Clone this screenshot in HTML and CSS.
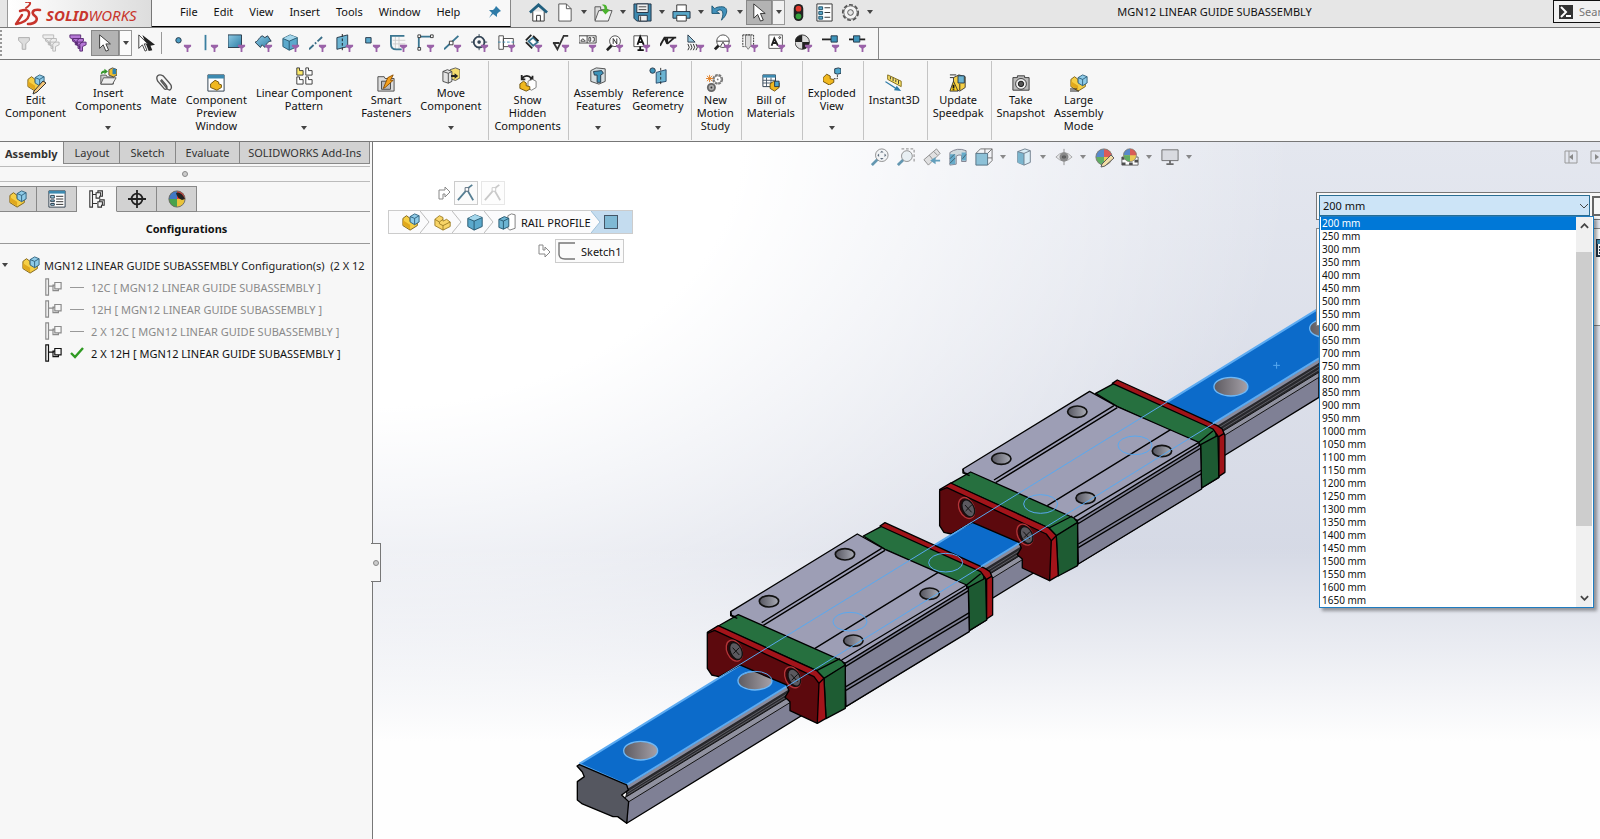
FILE: index.html
```html
<!DOCTYPE html>
<html lang="en">
<head>
<meta charset="utf-8">
<title>MGN12 LINEAR GUIDE SUBASSEMBLY</title>
<link rel="stylesheet" href="styles.css">
</head>
<body>
<svg class="defs" aria-hidden="true">
  <defs>
    <linearGradient id="blue" x1="0" y1="0" x2="1" y2="1"><stop offset="0" stop-color="#8fc9e4"/><stop offset="1" stop-color="#2d7fa6"/></linearGradient>
    <linearGradient id="hole" x1="0" y1="0" x2="1" y2="0"><stop offset="0" stop-color="#5d5a60"/><stop offset="1" stop-color="#a6a1a8"/></linearGradient>
    <linearGradient id="bore" x1="0" y1="0" x2="1" y2="0"><stop offset="0" stop-color="#55555f"/><stop offset="1" stop-color="#a9abb5"/></linearGradient>
    <symbol id="fun" viewBox="0 0 20 20"><path d="M11 12h8v2l-3 2v4h-2v-4l-3-2z" fill="#9a62a8"/></symbol>
    <symbol id="asm" viewBox="0 0 20 20"><path d="M1 6l4-3 4 3v3l8-1v6l-8 5-8-5z" fill="#f6cf45" stroke="#7a5c10"/><path d="M1 13l8 5v-5L1 8z" fill="#e0a81c"/><path d="M9 4l5-3 5 2v7l-5 3-5-3z" fill="#8ecbe8" stroke="#2c5f7a"/><path d="M9 4l5 2 5-3M14 6v7" fill="none" stroke="#2c5f7a"/></symbol>
    <symbol id="part" viewBox="0 0 20 20"><path d="M1 7l5-4 4 2v4l4-2 4 3v5l-8 4-9-5z" fill="#f8d568" stroke="#9b7a22"/><path d="M1 7l5 3 4-3M6 10v2l4 2 8-4M10 14v5" fill="none" stroke="#9b7a22"/></symbol>
    <symbol id="cube" viewBox="0 0 20 20"><path d="M2 6l8-4 8 3v10l-9 4-7-4z" fill="#5ba9cc" stroke="#24546b"/><path d="M2 6l8-4 8 3-9 4z" fill="#a4d7ec"/><path d="M2 6l7 3 9-4M9 9v10" fill="none" stroke="#24546b"/></symbol>
    <symbol id="cur" viewBox="0 0 20 20"><path d="M4 1v15l4-4 3 7 3-1-3-7h5z" fill="#fff" stroke="#333"/></symbol>
    <symbol id="doc" viewBox="0 0 20 20"><path d="M4 1h8l5 5v13H4z" fill="#fff" stroke="#555"/><path d="M12 1v5h5" fill="none" stroke="#555"/></symbol>
    <symbol id="cfg" viewBox="0 0 20 20"><path d="M2 1v18h3V1zM5 9h6M12 5h7v7h-7zM12 8h-2v6h6v-2" fill="none" stroke="currentColor" stroke-width="1.3"/></symbol>
    <symbol id="ball" viewBox="0 0 20 20"><circle cx="10" cy="10" r="9" fill="#e9c33a"/><path d="M10 10V1a9 9 0 0 0-9 9z" fill="#3f78c4"/><path d="M10 10V1a9 9 0 0 1 9 9z" fill="#d8423d"/><path d="M10 10H1a9 9 0 0 0 9 9z" fill="#49a24c"/><circle cx="10" cy="10" r="9" fill="none" stroke="#666"/></symbol>
    <symbol id="tri" viewBox="0 0 6 4"><path d="M0 0h6L3 4z" fill="currentColor"/></symbol>
    <g id="block">
      <path d="M880 108L940 76l300 134 10 150-52 32-3-130-250-114z" fill="#26703f" stroke="#000"/>
      <path d="M1195 262l52-28 3 126-52 32z" fill="#1d5a32" stroke="#000"/>
      <path d="M930 78l15-10 300 137 15 10 8 20v110l-18 12V240l-18-25z" fill="#a01318" stroke="#000"/>
      <path d="M1190 255l42-34M1250 238l16-10" fill="none" stroke="#000"/>
      <path d="M482 335L862 102l83 46 160 70 85 37 5 140-368 225V490L575 378l-90-32z" fill="#9d9eb5" stroke="#000"/>
      <path d="M825 490l370-228 3 133-370 225z" fill="#7f8095" stroke="#000"/>
      <path d="M815 480l375-225M826 500l370-228M828 560l370-222M828 571l370-222M575 368l360-223M580 376l365-225M735 445l370-228" fill="none" stroke="#000"/>
      <g fill="url(#bore)" stroke="#111" stroke-width="5"><ellipse cx="825" cy="163" rx="29" ry="17"/><ellipse cx="597" cy="304" rx="29" ry="17"/><ellipse cx="1079" cy="281" rx="29" ry="17"/><ellipse cx="850" cy="422" rx="29" ry="17"/></g>
      <path d="M445 378l60-34 310 138 12 14-64 40-23-24z" fill="#26703f" stroke="#000"/>
      <path d="M762 535l64-40v130l-58 31z" fill="#1e5c33" stroke="#000"/>
      <path d="M740 512l70-36M482 335v12l20 8" fill="none" stroke="#000"/>
      <path d="M412 397l33-20 295 135 22 23 6 120-26 15-14-130z" fill="#a3141a" stroke="#000"/>
      <path d="M412 400l22-9 298 139 15 20-5 120-82-38v-27l-15-13 12-20-7-17-140-60-63 35-22-5-13-20z" fill="#5c090d" stroke="#000"/>
      <path d="M747 550l15-15" stroke="#000"/>
      <g stroke="#b33438"><ellipse cx="493" cy="452" rx="22" ry="33" transform="rotate(-25 493 452)" fill="#300609"/><ellipse cx="668" cy="532" rx="22" ry="33" transform="rotate(-25 668 532)" fill="#300609"/></g>
      <g fill="#5b595f" stroke="#111"><ellipse cx="498" cy="453" rx="17" ry="27" transform="rotate(-25 498 453)"/><ellipse cx="673" cy="533" rx="17" ry="27" transform="rotate(-25 673 533)"/><path d="M488 443l20 22M508 443l-18 18M663 523l20 22M683 523l-18 18" stroke-width="3"/></g>
    </g>
  </defs>
</svg>
<div class="app">
  <header class="titlebar">
    <div class="logo">
      <svg class="ds" viewBox="0 0 28 24" fill="none" stroke="#c8352d" stroke-linecap="round" stroke-linejoin="round"><path d="M12 0c5-1 6 2 0 6" stroke-width="2"/><path d="M6 9c6-2 10-1 9 4S8 21 2 22l6-9" stroke-width="2.4"/><path d="M26 8c-8-1-9 3-5 6s1 8-7 8" stroke-width="2.6"/></svg>
      <span class="brand"><b>SOLID</b>WORKS</span>
    </div>
    <nav class="menu">
      <button>File</button><button>Edit</button><button>View</button><button>Insert</button><button>Tools</button><button>Window</button><button>Help</button>
      <svg class="pin" viewBox="0 0 14 14"><path d="M8 1l5 5-2 1-2 2v3L5 9l-4 4 3-5-3-3h4l2-2z" fill="#2f7ca8"/></svg>
    </nav>
    <div class="quick">
      <button aria-label="Home"><svg class="i20" viewBox="0 0 20 20"><path d="M4 9v10h12V9" fill="#fff" stroke="#333"/><path d="M1 10l9-8 9 8" fill="none" stroke="#21607f" stroke-width="3"/><path d="M8 19v-6h4v6" fill="none" stroke="#333"/></svg></button>
      <button aria-label="New"><svg class="i20"><use href="#doc"/></svg></button><i class="dd"><svg class="tri"><use href="#tri"/></svg></i>
      <button aria-label="Open"><svg class="i20" viewBox="0 0 20 20"><path d="M1 4h6v3h8v11H1z" fill="#ddd" stroke="#555"/><path d="M5 8h14l-4 11H1z" fill="#f3f3f3" stroke="#555"/><path d="M8 2c5-2 6 2 6 5h3l-5 5-4-5h3c0-3 0-4-3-5z" fill="#4bb32e"/></svg></button><i class="dd"><svg class="tri"><use href="#tri"/></svg></i>
      <button aria-label="Save"><svg class="i20" viewBox="0 0 20 20"><path d="M1 1h18v18H4l-3-3z" fill="#3d8ab0" stroke="#234"/><path d="M4 1h12v9H4zM6 13h9v6H6z" fill="#eee" stroke="#234"/><path d="M6 4h8M6 7h8M8 14v5" stroke="#444"/></svg></button><i class="dd"><svg class="tri"><use href="#tri"/></svg></i>
      <button aria-label="Print"><svg class="i20" viewBox="0 0 20 20"><path d="M5 9V2h10v7" fill="#fff" stroke="#333"/><path d="M1 9h18v7H1z" fill="#58a7c8" stroke="#234"/><path d="M5 13h10v6H5z" fill="#fff" stroke="#333"/></svg></button><i class="dd"><svg class="tri"><use href="#tri"/></svg></i>
      <button aria-label="Undo"><svg class="i20" viewBox="0 0 20 20"><path d="M1 3v8h8L6 9c4-4 9-1 5 9 8-7 7-15-1-14-3 0-5 1-6 2z" fill="#4191bb" stroke="#1e5674"/></svg></button><i class="dd"><svg class="tri"><use href="#tri"/></svg></i>
      <button class="pressed" aria-label="Select"><svg class="i20"><use href="#cur"/></svg></button><i class="dd boxed"><svg class="tri"><use href="#tri"/></svg></i>
      <button aria-label="Rebuild"><svg class="i20" viewBox="0 0 20 20"><rect x="5" y="1" width="10" height="18" rx="5" fill="#222"/><circle cx="10" cy="6" r="3" fill="#e0382c"/><circle cx="10" cy="14" r="3" fill="#35a13c"/></svg></button>
      <button aria-label="File properties"><svg class="i20" viewBox="0 0 20 20"><path d="M2 1h16v18H2z" fill="#fff" stroke="#333"/><path d="M4 4h4v3H4zM4 9h4v3H4zM4 14h4v3H4z" fill="#5ba9cc" stroke="#24546b"/><path d="M10 5h6M10 10h6M10 15h6" stroke="#333"/></svg></button>
      <button aria-label="Options"><svg class="i20" viewBox="0 0 20 20"><circle cx="10" cy="10" r="8" fill="none" stroke="#555" stroke-width="2" stroke-dasharray="4 2"/><circle cx="10" cy="10" r="7" fill="#f4f4f4" stroke="#777"/><circle cx="10" cy="10" r="3" fill="#e6e6e6" stroke="#555"/></svg></button><i class="dd"><svg class="tri"><use href="#tri"/></svg></i>
    </div>
    <h1>MGN12 LINEAR GUIDE SUBASSEMBLY</h1>
    <label class="search"><svg class="i14" viewBox="0 0 14 14"><path d="M0 0h14v14H0z" fill="#333"/><path d="M2 2l5 5-5 5M7 11h5" fill="none" stroke="#fff" stroke-width="2"/></svg><input type="text" placeholder="Search" aria-label="Search"></label>
  </header>

  <div class="filters">
    <i class="grip"></i>
    <button aria-label="Toggle filter bar"><svg class="i20" viewBox="0 0 20 20"><path d="M4 4h12v3l-4 4v6H8v-6L4 7z" fill="#ddd" stroke="#aaa"/></svg></button>
    <button aria-label="Clear filters"><svg class="i20" viewBox="0 0 20 20"><path d="M1 1h12v3l-4 3v5H7V8L1 4zM4 5h12v3l-4 3v5h-2v-5L4 8zM8 9h11v3l-4 2v5h-3v-5l-4-2z" fill="#eee" stroke="#b5b5b5"/></svg></button>
    <button aria-label="All filters"><svg class="i20" viewBox="0 0 20 20"><path d="M1 1h12v3l-4 3v5H7V8L1 4zM4 5h12v3l-4 3v5h-2v-5L4 8zM8 9h11v3l-4 2v5h-3v-5l-4-2z" fill="#b678d6" stroke="#54256e"/></svg></button>
    <button class="pressed big" aria-label="Select"><svg class="i20"><use href="#cur"/></svg></button><i class="dd boxed"><svg class="tri"><use href="#tri"/></svg></i>
    <button class="big" aria-label="Select other"><svg class="i20" viewBox="0 0 20 20"><path d="M6 1l14 11-5 1 2 5-4 1z" fill="#222"/><path d="M2 1v15l4-4 3 7 2-1-3-7h4z" fill="#fff" stroke="#333"/></svg></button>
    <i class="bar"></i>
    <button aria-label="Filter vertices"><svg class="i20" viewBox="0 0 20 20"><circle cx="5" cy="7" r="3" fill="#4a9cc2" stroke="#234"/><use href="#fun"/></svg></button>
    <button aria-label="Filter edges"><svg class="i20" viewBox="0 0 20 20"><path d="M5 1v17" stroke="#3a7fa0" stroke-width="2"/><use href="#fun"/></svg></button>
    <button aria-label="Filter faces"><svg class="i20" viewBox="0 0 20 20"><path d="M0 1h15v14H0z" fill="url(#blue)" stroke="#234"/><use href="#fun"/></svg></button>
    <button aria-label="Filter surface bodies"><svg class="i20" viewBox="0 0 20 20"><path d="M0 9c3 0 4-5 8-7l3 2 3-2 4 6c-3 0-5 2-7 7l-3-3-2 3z" fill="url(#blue)" stroke="#234"/><use href="#fun"/></svg></button>
    <button aria-label="Filter solid bodies"><svg class="i20" viewBox="0 0 20 20"><use href="#cube" x="-1" y="-1"/><use href="#fun"/></svg></button>
    <button aria-label="Filter axes"><svg class="i20" viewBox="0 0 20 20"><path d="M0 17L16 2" stroke="#3a6e88" stroke-width="2" stroke-dasharray="7 2 2 2"/><use href="#fun"/></svg></button>
    <button aria-label="Filter planes"><svg class="i20" viewBox="0 0 20 20"><path d="M1 4l12-3v13L1 17z" fill="#6cb4d2" stroke="#234"/><path d="M7 0v19" stroke="#111" stroke-dasharray="3 2"/><use href="#fun"/></svg></button>
    <button aria-label="Filter sketch points"><svg class="i20" viewBox="0 0 20 20"><path d="M3 4h6v6H3z" fill="#5ba9cc" stroke="#234"/><use href="#fun"/></svg></button>
    <button aria-label="Filter sketches"><svg class="i20" viewBox="0 0 20 20"><path d="M6 3v14M10 3v14M3 7h14M3 11h14" stroke="#ccc"/><path d="M16 2H1v9q0 6 6 6h6" fill="none" stroke="#3a7590" stroke-width="2"/><use href="#fun"/></svg></button>
    <button aria-label="Filter sketch segments"><svg class="i20" viewBox="0 0 20 20"><path d="M2 16V3h14" fill="none" stroke="#3a7590" stroke-width="2"/><path d="M1 1h3v3H1zM15 1h3v3h-3zM1 15h3v3H1z" fill="#fff" stroke="#333"/><use href="#fun"/></svg></button>
    <button aria-label="Filter midpoints"><svg class="i20" viewBox="0 0 20 20"><path d="M0 17L16 2" stroke="#3a7590" stroke-width="2"/><path d="M6 8h4v4H6z" fill="#fff" stroke="#333"/><use href="#fun"/></svg></button>
    <button aria-label="Filter center marks"><svg class="i20" viewBox="0 0 20 20"><circle cx="9" cy="9" r="6" fill="none" stroke="#345" stroke-width="2"/><circle cx="9" cy="9" r="2" fill="#345"/><path d="M9 0v4M9 14v4M0 9h4M14 9h4" stroke="#345"/><use href="#fun"/></svg></button>
    <button aria-label="Filter centerlines"><svg class="i20" viewBox="0 0 20 20"><path d="M1 2h5v15H1zM6 5h11v9H6z" fill="#fff" stroke="#444"/><path d="M0 9h18" stroke="#3a8ab0" stroke-dasharray="3 2"/><use href="#fun"/></svg></button>
    <button aria-label="Filter dimensions"><svg class="i20" viewBox="0 0 20 20"><path d="M4 8l5-4 5 5-5 4z" fill="#fff" stroke="#3a7590" stroke-width="2"/><path d="M1 7l6-6M9 2l6 6M1 9l7 7" stroke="#222" stroke-width="2"/><use href="#fun"/></svg></button>
    <button aria-label="Filter surface finish"><svg class="i20" viewBox="0 0 20 20"><path d="M1 10h7M2 10l4 7L13 2h5" fill="none" stroke="#333" stroke-width="2"/><use href="#fun"/></svg></button>
    <button aria-label="Filter geometric tolerances"><svg class="i20" viewBox="0 0 20 20"><path d="M0 2h19v8H0zM9 2v8M2 8q2-5 5 0z" fill="#fff" stroke="#333"/><path d="M11 4h2v4h-2zM15 4h2v4h-2" fill="none" stroke="#333"/><use href="#fun"/></svg></button>
    <button aria-label="Filter notes"><svg class="i20" viewBox="0 0 20 20"><path d="M1 18l6-6" stroke="#222" stroke-width="3"/><circle cx="10" cy="8" r="6" fill="#fff" stroke="#444"/><path d="M8 11V5l4 6V5" fill="none" stroke="#222"/><use href="#fun"/></svg></button>
    <button aria-label="Filter annotations"><svg class="i20" viewBox="0 0 20 20"><path d="M1 2h15v12H1z" fill="#fff" stroke="#444"/><path d="M5 12l3-9 4 9M6 9h5M8 14v4M5 18h7" fill="none" stroke="#111" stroke-width="2"/><use href="#fun"/></svg></button>
    <button aria-label="Filter weld symbols"><svg class="i20" viewBox="0 0 20 20"><path d="M0 13L5 4h13M8 4v7M8 11l8-7M5 4l3 7" fill="none" stroke="#222" stroke-width="2"/><use href="#fun"/></svg></button>
    <button aria-label="Filter weld beads"><svg class="i20" viewBox="0 0 20 20"><path d="M1 1v8h8z" fill="#9ac8dc" stroke="#234"/><path d="M1 11q3 4 0 7M4 11q3 4 0 7M7 11q3 4 0 7M10 11q3 4 0 7" fill="none" stroke="#222"/><use href="#fun"/></svg></button>
    <button aria-label="Filter datum targets"><svg class="i20" viewBox="0 0 20 20"><path d="M1 17l5-5" stroke="#222" stroke-width="3"/><circle cx="10" cy="8" r="7" fill="#fff" stroke="#444"/><path d="M3 8h14M7 14l3-5 3 5" fill="none" stroke="#333"/><use href="#fun"/></svg></button>
    <button aria-label="Filter cosmetic threads"><svg class="i20" viewBox="0 0 20 20"><path d="M5 1h6v12l-3 4-3-4z" fill="#ddd" stroke="#777"/><path d="M2 1v13h3M14 1v13h-3M2 1h12" fill="none" stroke="#222" stroke-dasharray="2 1"/><use href="#fun"/></svg></button>
    <button aria-label="Filter blocks"><svg class="i20" viewBox="0 0 20 20"><path d="M1 1h15v15H1z" fill="#fff" stroke="#555"/><path d="M4 13l3-8 4 8M5 10h5" fill="none" stroke="#222" stroke-width="2"/><circle cx="13" cy="4" r="1" fill="none" stroke="#222"/><use href="#fun"/></svg></button>
    <button aria-label="Filter centers of mass"><svg class="i20" viewBox="0 0 20 20"><circle cx="8" cy="9" r="8" fill="#ddd" stroke="#333"/><path d="M8 9V1a8 8 0 0 0-8 8zM8 9v8a8 8 0 0 0 8-8z" fill="#222"/><use href="#fun"/></svg></button>
    <button aria-label="Filter connection points"><svg class="i20" viewBox="0 0 20 20"><path d="M0 6h11" stroke="#222" stroke-width="2"/><path d="M10 2h7v7h-7z" fill="#3d94ba" stroke="#234"/><use href="#fun"/></svg></button>
    <button aria-label="Filter routing points"><svg class="i20" viewBox="0 0 20 20"><path d="M0 6h18" stroke="#222" stroke-width="2"/><path d="M5 2h7v7H5z" fill="#3d94ba" stroke="#234"/><use href="#fun"/></svg></button>
    <i class="edge"></i>
  </div>

  <div class="ribbon">
    <div class="group">
      <button class="cmd"><svg class="i20"><use href="#asm"/><path d="M7 17l9-10 3 2-9 9-4 2z" fill="#f4c77a" stroke="#333"/></svg>Edit<br>Component</button>
      <button class="cmd drop"><svg class="i20" viewBox="0 0 20 20"><path d="M2 9h6l1 2h7v8H2z" fill="#ccc" stroke="#555"/><path d="M5 12h14l-4 7H2z" fill="#eee" stroke="#555"/><path d="M2 8q0-4 4-4V2l4 3-4 3V6z" fill="#35962b"/><path d="M11 3l4-2 5 2v6l-4 2-5-2z" fill="#f0bd2a" stroke="#444"/><path d="M15 2h4v6h-4z" fill="#2d83b3"/></svg>Insert<br>Components<svg class="tri"><use href="#tri"/></svg></button>
      <button class="cmd"><svg class="i20" viewBox="0 0 20 20"><path d="M6 7l8 10q3 2 4-1t-2-6L9 2Q5 0 3 2t0 6l7 8q2 2 3 0t-1-4L7 6" fill="none" stroke="#555" stroke-width="1.5"/></svg>Mate</button>
      <button class="cmd"><svg class="i20" viewBox="0 0 20 20"><path d="M1 1h18v18H1z" fill="#fff" stroke="#234"/><path d="M1 1h18v4H1z" fill="#3d8ab0"/><path d="M4 11l5-4 4 2v2l3 1v3l-5 3-7-3z" fill="#f0b820" stroke="#6a4d08"/></svg>Component<br>Preview<br>Window</button>
      <button class="cmd drop"><svg class="i20" viewBox="0 0 20 20"><path d="M2 1h3v3h4v5H2z" fill="#fbe96a" stroke="#333"/><path d="M12 1h3v3h4v5h-7zM2 11h3v3h4v5H2zM12 11h3v3h4v5h-7z" fill="#fff" stroke="#333"/></svg>Linear Component<br>Pattern<svg class="tri"><use href="#tri"/></svg></button>
      <button class="cmd"><svg class="i20" viewBox="0 0 20 20"><path d="M1 3h7l1 2h10v14H1z" fill="#ddd" stroke="#444"/><path d="M5 8h10v9H5z" fill="#bbb" stroke="#444"/><path d="M7 16l5-12 6-3-3 6h3l-9 8z" fill="#f5a11d" stroke="#8a4c00"/></svg>Smart<br>Fasteners</button>
      <button class="cmd drop"><svg class="i20" viewBox="0 0 20 20"><path d="M9 3l6-2 5 2v9l-5 3-6-2z" fill="#f5dc6e" stroke="#555"/><path d="M1 5l5-2 5 2v11l-4 2-6-2z" fill="#e4e4e4" stroke="#444"/><path d="M1 5l6 2 4-2M7 7v11" fill="none" stroke="#444"/><path d="M10 9h4V7l4 3-4 3v-2h-4z" fill="#222"/></svg>Move<br>Component<svg class="tri"><use href="#tri"/></svg></button>
    </div>
    <div class="group"><button class="cmd"><svg class="i20" viewBox="0 0 20 20"><path d="M3 5q6-6 11 0M3 1v5h4M12 6h3V2" fill="none" stroke="#222" stroke-width="2"/><path d="M10 8l5-2 4 2v7l-5 3-4-2z" fill="#fff" stroke="#777"/><path d="M1 11l4-3 3 2v3l4 1v3l-4 2-7-3z" fill="#f0b820" stroke="#6a4d08"/></svg>Show<br>Hidden<br>Components</button></div>
    <div class="group">
      <button class="cmd drop"><svg class="i20" viewBox="0 0 20 20"><path d="M2 4l6-3 10 1v14l-7 3-9-3z" fill="#d5dde0" stroke="#444"/><path d="M5 5l9-1 2 3-3 2v8H9V9H6z" fill="#3d94ba" stroke="#234"/></svg>Assembly<br>Features<svg class="tri"><use href="#tri"/></svg></button>
      <button class="cmd drop"><svg class="i20" viewBox="0 0 20 20"><circle cx="4" cy="4" r="3" fill="#3d94ba" stroke="#234"/><path d="M8 6l11-3v13L8 18z" fill="#6cb4d2" stroke="#246"/><path d="M13 1v19" stroke="#222" stroke-dasharray="3 2"/></svg>Reference<br>Geometry<svg class="tri"><use href="#tri"/></svg></button>
    </div>
    <div class="group"><button class="cmd"><svg class="i20" viewBox="0 0 20 20"><circle cx="13" cy="6" r="5" fill="none" stroke="#777" stroke-width="2" stroke-dasharray="3 1"/><circle cx="13" cy="6" r="4" fill="#fff" stroke="#777"/><circle cx="13" cy="6" r="1" fill="#777"/><circle cx="6" cy="15" r="4" fill="#aaa" stroke="#666" stroke-width="2"/><circle cx="6" cy="15" r="1" fill="#333"/><path d="M4 1v8M0 5h8M1 2l6 6M7 2L1 8" stroke="#e07a1c"/></svg>New<br>Motion<br>Study</button></div>
    <div class="group"><button class="cmd"><svg class="i20" viewBox="0 0 20 20"><path d="M1 1h14v13H1z" fill="#fff" stroke="#234"/><path d="M1 1h14v3H1z" fill="#3d8ab0"/><path d="M1 7h14M1 10h14M5 4v10M10 4v10" stroke="#456"/><path d="M9 11l4-3 6 2v5l-5 4-5-3z" fill="#f0b820" stroke="#6a4d08"/><path d="M14 8h5v6h-5z" fill="#4fa6cb" stroke="#234"/></svg>Bill of<br>Materials</button></div>
    <div class="group"><button class="cmd drop"><svg class="i20" viewBox="0 0 20 20"><path d="M0 12l4-4 4 2v3l4 1v3l-5 3-7-4z" fill="#f0b820" stroke="#6a4d08"/><path d="M13 2l4-1 3 1v5l-4 1-3-1z" fill="#4fa6cb" stroke="#234"/><path d="M16 9v4h-5" fill="none" stroke="#222" stroke-dasharray="2 1"/></svg>Exploded<br>View<svg class="tri"><use href="#tri"/></svg></button></div>
    <div class="group"><button class="cmd"><svg class="i20" viewBox="0 0 20 20"><path d="M3 1l15 7v6L3 6z" fill="#fbe36a" stroke="#7a6410"/><path d="M6 3v3M9 4v4M12 6v3M15 7v4" stroke="#333"/><path d="M1 8l11 7 1-2 5 6-8-1 1-2L0 9z" fill="#2f7ca8"/></svg>Instant3D</button></div>
    <div class="group"><button class="cmd"><svg class="i20" viewBox="0 0 20 20"><path d="M5 4l6-3 7 2v12l-6 4-7-3z" fill="#f6cf45" stroke="#333"/><path d="M10 2h7v8h-7z" fill="#6cb4d2" stroke="#234"/><path d="M12 11v7M1 1h7M1 4h4" stroke="#222"/><path d="M5 8l5 11H1z" fill="#ffd21c" stroke="#333"/><path d="M5 12v4M5 17v1" stroke="#111" stroke-width="2"/></svg>Update<br>Speedpak</button></div>
    <div class="group last">
      <button class="cmd"><svg class="i20" viewBox="0 0 20 20"><path d="M1 4h5V2h8v2h5v14H1z" fill="#bbb" stroke="#333"/><circle cx="10" cy="11" r="6" fill="#eee" stroke="#333"/><circle cx="10" cy="11" r="3" fill="#555" stroke="#111"/></svg>Take<br>Snapshot</button>
      <button class="cmd"><svg class="i20"><use href="#asm"/><path d="M0 15h7M0 17h9" stroke="#222"/></svg>Large<br>Assembly<br>Mode</button>
    </div>
  </div>

  <main class="work">
    <aside class="side">
      <div class="inner">
        <nav class="tabs"><button class="on">Assembly</button><button>Layout</button><button>Sketch</button><button>Evaluate</button><button class="grow">SOLIDWORKS Add-Ins</button></nav>
        <div class="splitter"><i class="knob"></i></div>
        <div class="panes">
          <button aria-label="Feature tree"><svg class="i20"><use href="#asm"/></svg></button>
          <button aria-label="Properties"><svg class="i20" viewBox="0 0 20 20"><path d="M1 1h18v18H1z" fill="#fff" stroke="#234"/><path d="M1 1h18v3H1z" fill="#3d8ab0"/><path d="M3 6h4v3H3zM3 11h4v2H3zM3 15h4v2H3z" fill="#9ccde2" stroke="#234"/><path d="M9 7h8M9 10h8M9 13h8M9 16h8" stroke="#222"/></svg></button>
          <button class="on" aria-label="Configurations"><svg class="i20" viewBox="0 0 20 20"><path d="M2 1v18h3V1zM5 5h4M5 15h5M9 3h2V1h5v6h-3v2H9zM11 13h2v-2h5v6h-3v2h-4zM11 3h3v4M13 13h3v4" fill="none" stroke="#333" stroke-width="1.2"/></svg></button>
          <button aria-label="Dimension manager"><svg class="i20" viewBox="0 0 20 20"><circle cx="10" cy="10" r="6" fill="none" stroke="#222" stroke-width="2"/><path d="M10 0v20M0 10h20" stroke="#222" stroke-width="2"/></svg></button>
          <button aria-label="Display manager"><svg class="i20"><use href="#ball"/><path d="M8 3q5-2 9 6l-3 1q-5-2-6-7" fill="#222"/></svg></button>
        </div>
        <h2>Configurations</h2>
        <ul class="tree">
          <li class="root"><svg class="tri"><use href="#tri"/></svg><svg class="i18"><use href="#asm"/></svg>MGN12 LINEAR GUIDE SUBASSEMBLY Configuration(s)&nbsp; (2 X 12</li>
          <li><svg class="i18"><use href="#cfg"/></svg><i class="mark dash"></i>12C [ MGN12 LINEAR GUIDE SUBASSEMBLY ]</li>
          <li><svg class="i18"><use href="#cfg"/></svg><i class="mark dash"></i>12H [ MGN12 LINEAR GUIDE SUBASSEMBLY ]</li>
          <li><svg class="i18"><use href="#cfg"/></svg><i class="mark dash"></i>2 X 12C [ MGN12 LINEAR GUIDE SUBASSEMBLY ]</li>
          <li class="active"><svg class="i18"><use href="#cfg"/></svg><svg class="mark" viewBox="0 0 14 12"><path d="M1 6l4 4 8-9" fill="none" stroke="#2f9a22" stroke-width="2.4"/></svg>2 X 12H [ MGN12 LINEAR GUIDE SUBASSEMBLY ]</li>
        </ul>
      </div>
      <i class="handle"><i class="knob"></i></i>
    </aside>

    <section class="canvas">
      <svg class="model" viewBox="373 142 1227 697" preserveAspectRatio="xMidYMid slice" role="img" aria-label="Linear guide rail with two carriages">
        <g transform="translate(570 500) scale(.3333)" stroke-width="4" stroke-linejoin="round">
          <path d="M170 855L2247-425v117L170 970z" fill="#7f8095" stroke="#000"/>
          <path d="M28 792L2247-575v150L170 855z" fill="#0c6bca"/>
          <path d="M170 858L2247-422v10L172 870z" fill="#8a8b9c"/>
          <path d="M172 867L2247-411v30L165 893z" fill="#28282c"/>
          <path d="M172 877L2247-402M172 884L2247-391" stroke="#77777f" stroke-width="2"/>
          <path d="M165 893L2247-383v15L172 908z" fill="#90919f" stroke="#111" stroke-width="3"/>
          <path d="M28 792L2247-575M170 855L2247-425M28 792l142 63" stroke="#5cabf2" stroke-width="6"/>
          <path d="M28 794l-7 4 16 18 6 14-21 15v55l15 12 92 38h14l27 20 6-65-21-20 20-15-5-15z" fill="#555760" stroke="#000"/>
          <g fill="url(#hole)" stroke="#6db8f7"><ellipse cx="212" cy="752" rx="51" ry="28"/><ellipse cx="555" cy="542" rx="51" ry="28"/><ellipse cx="1983" cy="-340" rx="51" ry="28"/><ellipse cx="2270" cy="-515" rx="51" ry="28"/></g>
          <use href="#block" x="697" y="-428"/>
          <use href="#block"/>
          <g fill="none" stroke="#58a9f0" stroke-width="3"><path d="M447 532L1205 67M650 560L1320 147M1140 107L1840-324M1340 135L1935-232"/><ellipse cx="840" cy="365" rx="51" ry="28"/><ellipse cx="1127" cy="188" rx="51" ry="28"/><ellipse cx="1412" cy="12" rx="51" ry="28"/><ellipse cx="1695" cy="-164" rx="51" ry="28"/><path d="M504 542a51 28 0 0 1 102 0M2110-404h20M2120-414v20"/></g>
        </g>
      </svg>

      <div class="hud">
        <button aria-label="Zoom to fit"><svg class="i20" viewBox="0 0 20 20"><path d="M1 19l7-7" stroke="#4b87a5" stroke-width="3"/><circle cx="12" cy="8" r="7" fill="#f2f4f6" stroke="#777"/><path d="M12 3l2 2h-4zM12 13l2-2h-4zM7 8l2-2v4zM17 8l-2-2v4z" fill="#456"/></svg></button>
        <button aria-label="Zoom to area"><svg class="i20" viewBox="0 0 20 20"><path d="M5 1h14v14" fill="none" stroke="#666" stroke-dasharray="3 2"/><path d="M1 19l6-6" stroke="#4b87a5" stroke-width="3"/><circle cx="11" cy="9" r="6" fill="#e6eef2" stroke="#777"/></svg></button>
        <button aria-label="Previous view"><svg class="i20" viewBox="0 0 20 20"><path d="M1 13l7-6 7-6 4 5-6 6-7 7z" fill="#ddd" stroke="#777"/><path d="M7 8l4 5M12 4l4 4" stroke="#777"/><path d="M19 15h-5v3l-6-4 6-4v3h5z" fill="#4b91b2"/></svg></button>
        <button aria-label="Section view"><svg class="i20" viewBox="0 0 20 20"><path d="M1 5q8-6 18-2v12h-5V8q-3-1-6 1v9l-7 1z" fill="#ccd6da" stroke="#667"/><path d="M1 7h6v11H1zM14 5h5v9h-5z" fill="#4f9fc2"/><path d="M1 12l5-5M1 17l6-6M15 12l4-5" stroke="#245"/></svg></button>
        <button aria-label="View orientation"><svg class="i20" viewBox="0 0 20 20"><path d="M1 6l5-5h13v13l-5 5M14 6l5-5M11 1v5M14 11h5" fill="none" stroke="#555"/><path d="M1 6h13v13H1z" fill="#7cb9d2" stroke="#35566b"/></svg></button><svg class="tri"><use href="#tri"/></svg>
        <button aria-label="Display style"><svg class="i20" viewBox="0 0 20 20"><path d="M3 4l8-3 6 2v13l-7 3-7-3z" fill="#d5edf6" stroke="#567"/><path d="M3 4l7 2v13l-7-3z" fill="#66abc8"/><path d="M3 4l7 2 7-3M10 6v13" fill="none" stroke="#567"/></svg></button><svg class="tri"><use href="#tri"/></svg>
        <button aria-label="Hide or show items"><svg class="i20" viewBox="0 0 20 20"><path d="M1 10q9-10 18 0-9 9-18 0z" fill="#e6e6e8" stroke="#999"/><circle cx="10" cy="10" r="5" fill="#777"/><circle cx="10" cy="10" r="2" fill="#222"/><path d="M10 1v18" stroke="#777"/></svg></button><svg class="tri"><use href="#tri"/></svg>
        <button aria-label="Edit appearance"><svg class="i20"><use href="#ball"/><path d="M7 16l9-9 3 3-9 8-4 1z" fill="#f4dc9a" stroke="#444"/></svg></button>
        <button aria-label="Apply scene"><svg class="i20" viewBox="0 0 20 20"><path d="M1 10h18v9H1z" fill="#fff" stroke="#444"/><path d="M1 16h4v3H1zM9 16h4v3H9zM15 13h4v3h-4zM1 10h3v3H1z" fill="#333"/><use href="#ball" x="2" y="0" width="16" height="16"/></svg></button><svg class="tri"><use href="#tri"/></svg>
        <button aria-label="View settings"><svg class="i20" viewBox="0 0 20 20"><path d="M1 2h18v12H1z" fill="#d7d9de" stroke="#555"/><path d="M10 14v4M6 18h8" stroke="#555" stroke-width="2"/></svg></button><svg class="tri"><use href="#tri"/></svg>
      </div>
      <div class="winctl">
        <button aria-label="Previous pane"><svg class="i14" viewBox="0 0 14 14"><path d="M1 1h12v12H1zM5 1v12" fill="none" stroke="#999"/><path d="M9 4v6L5 7z" fill="#888"/></svg></button>
        <button aria-label="Next pane"><svg class="i14" viewBox="0 0 14 14"><path d="M1 1h12v12H1z" fill="none" stroke="#999"/><path d="M5 4v6l4-3z" fill="#888"/></svg></button>
      </div>

      <div class="crumbs">
        <div class="crow up"><svg class="i14" viewBox="0 0 14 14"><path d="M2 13V4h6V1l5 5-5 5V8H6v5z" fill="#fff" stroke="#888"/></svg>
          <button class="tile" aria-label="Mates"><svg class="i20" viewBox="0 0 20 20"><path d="M1 18L13 4l4-3M11 6l7 12" fill="none" stroke="#567f93" stroke-width="2"/><path d="M9 4h4v4H9z" fill="#fff" stroke="#567"/></svg></button>
          <button class="tile faint" aria-label="Suppressed mates"><svg class="i20" viewBox="0 0 20 20"><path d="M1 18L13 4l4-3M11 6l7 12" fill="none" stroke="#888" stroke-width="2"/><path d="M9 4h4v4H9z" fill="#fff" stroke="#888"/></svg></button></div>
        <div class="path">
          <button aria-label="Assembly"><svg class="i18"><use href="#asm"/></svg></button><svg class="chev" viewBox="0 0 10 22"><path d="M0 0l9 11-9 11" fill="none" stroke="#bbb"/></svg>
          <button aria-label="Part"><svg class="i18"><use href="#part"/></svg></button><svg class="chev" viewBox="0 0 10 22"><path d="M0 0l9 11-9 11" fill="none" stroke="#bbb"/></svg>
          <button aria-label="Body"><svg class="i18"><use href="#cube"/></svg></button><svg class="chev" viewBox="0 0 10 22"><path d="M0 0l9 11-9 11" fill="none" stroke="#bbb"/></svg>
          <button class="named"><svg class="i18" viewBox="0 0 20 20"><path d="M11 3l4-2 4 1v15l-6 2-2-2z" fill="#fff" stroke="#777"/><path d="M1 7l6-3 5 2v9l-6 3-5-2z" fill="#6cb4d2" stroke="#24546b"/><path d="M1 7l5 2 6-3M6 9v9" fill="none" stroke="#24546b"/></svg>RAIL PROFILE</button>
          <span class="end"><svg class="chev" viewBox="0 0 10 22"><path d="M0 0l9 11-9 11z" fill="#fbfbfc"/><path d="M0 0l9 11-9 11" fill="none" stroke="#9fc0d8"/></svg><button aria-label="Face"><svg class="i14" viewBox="0 0 14 14"><path d="M0 0h14v14H0z" fill="#7fb9d4" stroke="#456" stroke-width="2"/></svg></button></span>
        </div>
        <div class="crow down"><svg class="i14" viewBox="0 0 14 14"><path d="M2 1h4v5h2V3l5 5-5 5v-3H2z" fill="#fff" stroke="#888"/></svg>
          <button class="tile wide"><svg class="i18" viewBox="0 0 18 18"><path d="M17 1H1v11q0 5 6 5h10" fill="none" stroke="#777" stroke-width="1.4"/></svg>Sketch1</button></div>
      </div>

      <div class="taskpane">
        <div class="field"><select aria-label="Length"><option>200 mm</option></select><svg class="arrow" viewBox="0 0 10 6"><path d="M1 1l4 4 4-4" fill="none" stroke="#444"/></svg><i class="stub"></i></div>
        <div class="card"><svg class="i18" viewBox="0 0 18 18"><path d="M1 1h16v16H1z" fill="#fff" stroke="#234" stroke-width="2"/><path d="M1 1h16v4H1z" fill="#3d8ab0"/><path d="M3 7h3v2H3zM3 10h3v2H3zM3 13h3v2H3z" fill="#345"/></svg></div>
        <div class="list">
          <ul role="listbox" aria-label="Length options">
            <li role="option" aria-selected="true">200 mm</li><li role="option">250 mm</li><li role="option">300 mm</li><li role="option">350 mm</li><li role="option">400 mm</li><li role="option">450 mm</li><li role="option">500 mm</li><li role="option">550 mm</li><li role="option">600 mm</li><li role="option">650 mm</li><li role="option">700 mm</li><li role="option">750 mm</li><li role="option">800 mm</li><li role="option">850 mm</li><li role="option">900 mm</li><li role="option">950 mm</li><li role="option">1000 mm</li><li role="option">1050 mm</li><li role="option">1100 mm</li><li role="option">1150 mm</li><li role="option">1200 mm</li><li role="option">1250 mm</li><li role="option">1300 mm</li><li role="option">1350 mm</li><li role="option">1400 mm</li><li role="option">1450 mm</li><li role="option">1500 mm</li><li role="option">1550 mm</li><li role="option">1600 mm</li><li role="option">1650 mm</li>
          </ul>
          <div class="scroll"><svg class="cap" viewBox="0 0 10 6"><path d="M1 5l4-4 4 4" fill="none" stroke="#444" stroke-width="2"/></svg><i class="thumb"></i><svg class="cap" viewBox="0 0 10 6"><path d="M1 1l4 4 4-4" fill="none" stroke="#444" stroke-width="2"/></svg></div>
        </div>
      </div>
    </section>
  </main>
</div>
</body>
</html>
```
FILE: styles.css
```css
* { box-sizing: border-box; }
body { margin: 0; background: #f7f7f7; color: #111; font: 11px/13px "Noto Sans", "Open Sans", sans-serif; }
button { margin: 0; padding: 0; border: 0; background: none; color: inherit; font: inherit; }
svg { display: block; flex: none; }
ul { margin: 0; padding: 0; list-style: none; }
i { display: block; flex: none; font-style: normal; }
.defs { position: absolute; width: 0; height: 0; }
.i20, .i18 { width: 18px; height: 18px; }
.i14 { width: 14px; height: 14px; }
svg.i20:not([viewBox]) { overflow: visible; }
.tri { width: 6px; height: 4px; color: #444; }
.app { height: 100vh; display: flex; flex-direction: column; overflow: hidden; }

.titlebar { display: flex; height: 28px; flex: none; padding-left: 7px; background: #e6e6e6; border-bottom: 1px solid #777; overflow: hidden; }
.logo { display: flex; width: 145px; align-items: center; padding-left: 6px; gap: 4px; border-left: 1px solid #999; border-right: 1px solid #777; background: linear-gradient(to right, #fff, #ddd); }
.ds { width: 28px; height: 24px; }
.brand { color: #c8352d; font-size: 15px; font-style: italic; line-height: 24px; padding-top: 3px; }
.menu { display: flex; width: 359px; padding: 0 8px 3px 28px; gap: 16px; align-items: center; background: #f8f8f8; border-bottom: 1px solid #000; border-right: 1px solid #888; }
.pin { width: 14px; height: 14px; margin-left: auto; }
.quick { display: flex; align-items: center; padding: 0 0 3px 15px; width: 365px; }
.quick button { width: 26px; height: 25px; display: grid; place-items: center; }
.quick .i20 { width: 19px; height: 19px; }
.dd { width: 13px; display: grid; place-items: center; }
.pressed { background: #b3b3b3; outline: 1px solid #888; outline-offset: -1px; }
.boxed { height: 25px; border: 1px solid #999; background: #f1f1f1; }
h1 { flex: 1; margin: 0; font-size: 11px; font-weight: 400; line-height: 24px; text-align: center; }
.search { display: flex; align-items: center; gap: 6px; width: 47px; height: 23px; padding-left: 5px; border: 1px solid #111; border-right: 0; background: #f2f2f2; overflow: hidden; }
.search input { width: 60px; flex: none; padding: 0; border: 0; background: none; font: 11px/13px "Noto Sans", sans-serif; }

.filters { display: flex; height: 32px; flex: none; align-items: center; padding-bottom: 1px; border-bottom: 1px solid #777; }
.filters button { width: 27px; height: 20px; display: grid; place-items: center; }
.filters .big { width: 28px; height: 26px; }
.filters .boxed { height: 26px; background: #fafafa; }
.grip { width: 3px; height: 26px; margin-right: 7px; border-left: 2px dotted #999; }
.bar { width: 1px; height: 22px; margin: 0 7px 0 1px; background: #999; }
.edge { width: 1px; height: 31px; margin-left: 7px; background: #888; }

.ribbon { display: flex; height: 82px; flex: none; border-bottom: 1px solid #777; }
.group { display: flex; margin: 1px 0; padding: 0 2px 0 1px; border-right: 1px solid #c4c4c4; }
.group.last { border: 0; }
.cmd { display: block; padding: 13px 5px 0 4px; text-align: center; align-self: flex-start; }
.cmd .i20 { margin: 0 auto 1px; }
.cmd.drop { padding-top: 6px; }
.cmd.drop .tri { margin: 14px auto 0; }

.work { display: flex; flex: 1; min-height: 0; }
.side { position: relative; width: 373px; flex: none; border-right: 1px solid #777; z-index: 1; }
.inner { width: 370px; overflow: hidden; }
.tabs { display: flex; height: 22px; }
.tabs button { padding: 0 10px; background: #d2d2d2; border: solid #888; border-width: 0 1px 1px 0; color: #333; }
.tabs .on { padding: 0 6px 0 5px; background: #f8f8f8; border-bottom: 0; font-weight: 700; }
.tabs .grow { flex: 1; padding: 0 4px; }
.splitter { height: 16px; margin: 2px 0 4px; border: solid #bbb; border-width: 1px 0; display: grid; place-items: center; }
.knob { width: 6px; height: 6px; border: 1px solid #888; border-radius: 50%; background: #ccc; }
.panes { display: flex; height: 26px; border-bottom: 1px solid #999; }
.panes button { width: 40px; height: 26px; display: grid; place-items: center; background: #d2d2d2; border: 1px solid #888; border-left: 0; }
.panes button:first-child { width: 37px; }
.panes .on { background: #f7f7f7; border-top-color: #ccc; border-bottom-color: #f7f7f7; }
h2 { margin: 0; height: 32px; line-height: 34px; text-align: center; font-size: 11px; border-bottom: 1px solid #999; padding-left: 3px; }
.tree { padding-top: 10px; color: #8a8a8a; }
.tree li { display: flex; height: 22px; align-items: center; padding-left: 44px; white-space: nowrap; }
.tree li.root { color: #222; padding-left: 2px; gap: 4px; }
.tree .root .tri { margin-right: 10px; }
.tree .active { color: #111; }
.mark { width: 14px; height: 12px; margin: 0 7px 0 8px; }
.dash { height: 1px; background: #999; }
.handle { position: absolute; left: 371px; top: 401px; width: 10px; height: 39px; background: #f7f7f7; border: 1px solid #777; border-left: 0; display: grid; place-items: center; }

.canvas { position: relative; flex: 1; min-width: 0; overflow: hidden;
  background: linear-gradient(to bottom, rgba(255,255,255,0) 58%, #fefefe 86%), radial-gradient(ellipse 75% 95% at 0 0, #fff 40%, rgba(255,255,255,0) 100%), linear-gradient(to bottom, #e4e7ef, #d5d9e5 60%); }
.model { position: absolute; inset: 0; width: 100%; height: 100%; }
.hud { position: absolute; left: 40%; top: 5px; display: flex; align-items: center; padding-left: 3px; opacity: .85; }
.hud button { width: 26px; height: 20px; display: grid; place-items: center; }
.hud .tri { margin: 0 5px 0 3px; color: #777; }
.winctl { position: absolute; right: -4px; top: 8px; display: flex; gap: 12px; }

.crumbs { position: absolute; left: 15px; top: 39px; display: grid; gap: 5px; justify-items: start; }
.crow { display: flex; gap: 2px; align-items: center; }
.up { padding-left: 49px; gap: 3px; }
.down { padding-left: 149px; gap: 4px; }
.tile { display: flex; align-items: center; justify-content: center; gap: 5px; width: 24px; height: 24px; border: 1px solid #ccc; background: #fbfbfb; }
.tile.wide { width: auto; padding: 0 2px; }
.faint { opacity: .45; }
.path { display: flex; height: 24px; align-items: center; padding-left: 13px; border: 1px solid #ccc; background: #fbfbfc; }
.path button { display: flex; align-items: center; gap: 5px; }
.chev { width: 10px; height: 22px; margin-right: 4px; }
.end { display: flex; height: 22px; align-items: center; padding-right: 14px; background: #c4dcef; }
.end .chev { margin-right: 3px; }

.taskpane { position: absolute; right: 0; top: 50px; width: 284px; }
.field { display: flex; height: 28px; padding: 2px 0 0 2px; border: 1px solid #777; border-right: 0; background: #f7f7f7; position: relative; }
.field select { appearance: none; width: 275px; height: 21px; padding: 0 3px 1px; border: 1px solid #2a6e94; border-radius: 0; background: #cce4f7; color: #111; font: 11px/13px "Noto Sans", sans-serif; }
.arrow { position: absolute; right: 11px; top: 10px; width: 10px; height: 6px; }
.stub { width: 8px; height: 20px; margin: 1px 0 0 2px; border: 2px solid #666; border-right: 0; }
.card { height: 98px; margin-top: 8px; padding-top: 10px; border: 1px solid #888; border-right: 0; background: #fafafa; display: flex; justify-content: flex-end; overflow: hidden; }
.card svg { margin-right: -14px; }
.list { position: absolute; left: 3px; top: 24px; width: 275px; display: flex; padding: 0 1px; border: 1px solid #1f7cc0; background: #fff; box-shadow: 3px 3px 3px rgba(0,0,0,.35); }
.list ul { flex: 1; }
.list li { height: 13px; padding-left: 1px; font-size: 10px; }
.list li[aria-selected] { background: #0078d7; color: #fff; }
.scroll { display: flex; flex-direction: column; align-items: center; width: 16px; padding: 6px 0; background: #f0f0f0; }
.cap { width: 9px; height: 6px; }
.thumb { width: 16px; height: 274px; margin: 23px 0 auto; background: #cdcdcd; }
```
